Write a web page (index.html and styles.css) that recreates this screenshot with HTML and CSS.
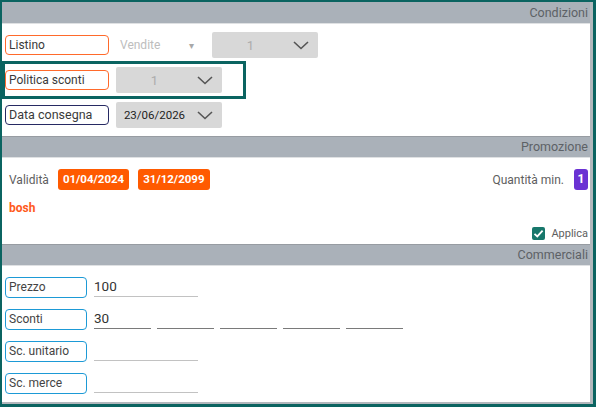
FILE: index.html
```html
<!DOCTYPE html>
<html lang="it">
<head>
    <meta charset="UTF-8">
    <meta name="viewport" content="width=device-width, initial-scale=1.0">
    <title>Condizioni</title>
    <link rel="stylesheet" href="styles.css">
</head>
<body>
    <div class="frame">
        <div class="panel">
            <div class="section-head first">Condizioni</div>
            <div class="section-body conditions">
                <div class="row">
                    <div class="tag tag-orange">Listino</div>
                    <div class="plain-select">Vendite <span class="caret">&#9662;</span></div>
                    <div class="dropdown wide">
                        <span class="dropdown-value muted">1</span>
                        <svg class="chevron" width="16" height="9" viewBox="0 0 16 9"><polyline points="1,1 8,7.5 15,1" fill="none" stroke="#555" stroke-width="1.6"/></svg>
                    </div>
                </div>
                <div class="row row-focus">
                    <div class="tag tag-orange">Politica sconti</div>
                    <div class="dropdown">
                        <span class="dropdown-value muted">1</span>
                        <svg class="chevron" width="16" height="9" viewBox="0 0 16 9"><polyline points="1,1 8,7.5 15,1" fill="none" stroke="#555" stroke-width="1.6"/></svg>
                    </div>
                </div>
                <div class="row">
                    <div class="tag tag-navy">Data consegna</div>
                    <div class="dropdown">
                        <span class="dropdown-value">23/06/2026</span>
                        <svg class="chevron" width="16" height="9" viewBox="0 0 16 9"><polyline points="1,1 8,7.5 15,1" fill="none" stroke="#555" stroke-width="1.6"/></svg>
                    </div>
                </div>
            </div>

            <div class="section-head">Promozione</div>
            <div class="section-body promo">
                <div class="promo-line">
                    <span class="promo-label">Validità</span>
                    <span class="date-badge">01/04/2024</span>
                    <span class="date-badge">31/12/2099</span>
                    <span class="spacer"></span>
                    <span class="promo-label">Quantità min.</span>
                    <span class="qty-badge">1</span>
                </div>
                <div class="promo-name">bosh</div>
                <div class="apply">
                    <span class="checkbox">
                        <svg width="13" height="13" viewBox="0 0 13 13"><polyline points="2.5,6.8 5.3,9.4 10.6,3.6" fill="none" stroke="#fff" stroke-width="1.8"/></svg>
                    </span>
                    <span class="apply-label">Applica</span>
                </div>
            </div>

            <div class="section-head">Commerciali</div>
            <div class="section-body trade">
                <div class="trade-row">
                    <div class="tag tag-blue">Prezzo</div>
                    <div class="field">100</div>
                </div>
                <div class="trade-row">
                    <div class="tag tag-blue">Sconti</div>
                    <div class="field short dark">30</div>
                    <div class="field short dark"></div>
                    <div class="field short dark"></div>
                    <div class="field short dark"></div>
                    <div class="field short dark"></div>
                </div>
                <div class="trade-row">
                    <div class="tag tag-blue">Sc. unitario</div>
                    <div class="field"></div>
                </div>
                <div class="trade-row">
                    <div class="tag tag-blue">Sc. merce</div>
                    <div class="field"></div>
                </div>
            </div>
        </div>
    </div>
</body>
</html>
```

FILE: styles.css
```css
* {
    box-sizing: border-box;
}
body {
    margin: 0;
    font-family: Roboto, "Liberation Sans", sans-serif;
    color: #333;
    background-color: #ffffff;
}
.frame {
    width: 596px;
    height: 407px;
    border-style: solid;
    border-color: #0b6461;
    border-width: 2px 3px 3px 2px;
}
.panel {
    height: 100%;
    display: flex;
    flex-direction: column;
    background-color: white;
    border-right: 3px solid #b3b8bd;
    border-bottom: 2px solid #b3b8bd;
}
.section-head {
    height: 22px;
    padding-right: 2px;
    background-color: #aab1b9;
    border-top: 1px solid #979ca2;
    border-bottom: 1px solid #dfe1e3;
    color: #5d6166;
    font-size: 12.5px;
    line-height: 20px;
    text-align: right;
}
.section-head.first {
    height: 22px;
    border-top: none;
    line-height: 21px;
}

/* Condizioni */
.conditions {
    padding: 8px 0;
}
.row {
    display: flex;
    align-items: center;
    height: 26px;
    padding-left: 3px;
}
.row + .row {
    margin-top: 3px;
}
.row-focus {
    height: 38px;
    padding: 0 21px 0 0;
    border: 3px solid #0b6461;
    width: 244px;
}
.tag {
    height: 20px;
    width: 104px;
    padding-left: 3px;
    border: 1.5px solid;
    border-radius: 4px;
    font-size: 12px;
    line-height: 18px;
    color: #3a3a3a;
    white-space: nowrap;
}
.tag-orange {
    border-color: #ff6a2b;
}
.tag-navy {
    border-color: #272a63;
    font-size: 12.5px;
}
.tag-blue {
    width: 82px;
    height: 21px;
    border-color: #1d9ad6;
    line-height: 18px;
    color: #444;
}
.plain-select {
    width: 84px;
    margin-left: 7px;
    padding-left: 4px;
    font-size: 12px;
    color: #bdbdbd;
    display: flex;
    align-items: center;
}
.caret {
    margin-left: auto;
    margin-right: 6px;
    font-size: 10px;
    color: #a8a8a8;
}
.dropdown {
    width: 106px;
    height: 26px;
    margin-left: 7px;
    display: flex;
    align-items: center;
    background-color: #d8d8d8;
    border-radius: 2px;
}
.dropdown.wide {
    margin-left: 12px;
}
.dropdown-value {
    flex: 1;
    text-align: center;
    font-size: 11.5px;
    color: #1e1e1e;
}
.dropdown-value.muted {
    color: #acacac;
    font-size: 13px;
}
.chevron {
    margin: 1px 9px 0 4px;
}

/* Promozione */
.promo {
    padding: 11px 2px 4px 7px;
}
.promo-line {
    display: flex;
    align-items: center;
    height: 21px;
}
.promo-label {
    font-size: 12px;
    color: #5e5e5e;
}
.date-badge {
    height: 21px;
    margin-left: 9px;
    padding: 0 5px;
    background-color: #ff5a00;
    border-radius: 3px;
    color: white;
    font-size: 11.5px;
    font-weight: bold;
    line-height: 21px;
}
.date-badge:first-of-type {
    margin-left: 12px;
}
.spacer {
    flex: 1;
}
.qty-badge {
    width: 14px;
    height: 21px;
    margin-left: 10px;
    background-color: #6a32d3;
    border-radius: 3px;
    color: white;
    font-size: 12px;
    font-weight: bold;
    line-height: 21px;
    text-align: center;
}
.promo-name {
    margin-top: 10px;
    height: 16px;
    font-size: 12px;
    font-weight: bold;
    color: #ff5a1c;
    line-height: 16px;
}
.apply {
    margin-top: 11px;
    height: 13px;
    display: flex;
    justify-content: flex-end;
    align-items: center;
}
.checkbox {
    width: 13px;
    height: 13px;
    border-radius: 2px;
    background-color: #17776b;
    display: flex;
}
.apply-label {
    margin-left: 6px;
    font-size: 11px;
    color: #5e5e5e;
}

/* Commerciali */
.trade {
    flex: 1;
    padding: 11px 0 0 3px;
}
.trade-row {
    display: flex;
    align-items: flex-end;
    height: 21px;
}
.trade-row + .trade-row {
    margin-top: 11px;
}
.field {
    width: 104px;
    height: 21px;
    margin-left: 7px;
    margin-bottom: 1px;
    padding-top: 2px;
    border-bottom: 1px solid #c2c2c2;
    font-size: 13.5px;
    line-height: 16px;
    color: #333;
}
.field.short {
    width: 57px;
    margin-left: 6px;
}
.field.short:nth-child(2) {
    margin-left: 7px;
}
.field.dark {
    border-bottom-color: #7a7a7a;
}
```
